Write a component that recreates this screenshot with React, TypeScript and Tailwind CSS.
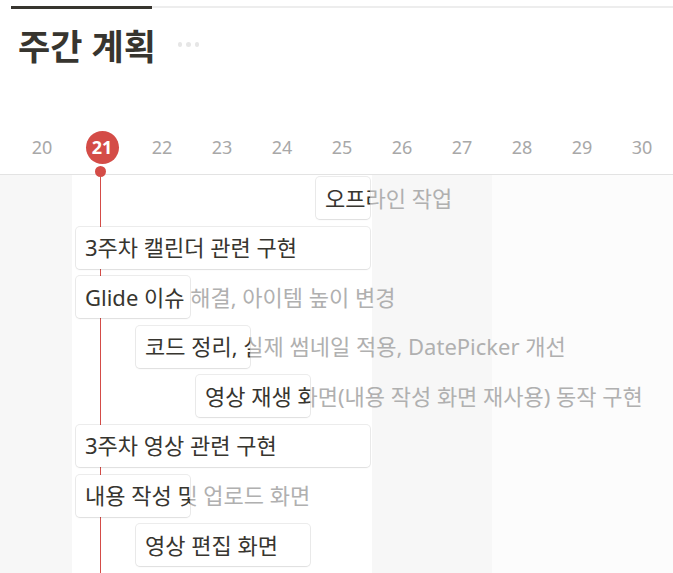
const days = [20, 21, 22, 23, 24, 25, 26, 27, 28, 29, 30]

type Task = { title: string; start: string; span: string }

// start/span are full class names so Tailwind picks them up
const tasks: Task[] = [
  { title: '오프라인 작업', start: 'col-start-7', span: 'col-span-1' },
  { title: '3주차 캘린더 관련 구현', start: 'col-start-3', span: 'col-span-5' },
  { title: 'Glide 이슈 해결, 아이템 높이 변경', start: 'col-start-3', span: 'col-span-2' },
  { title: '코드 정리, 실제 썸네일 적용, DatePicker 개선', start: 'col-start-4', span: 'col-span-2' },
  { title: '영상 재생 화면(내용 작성 화면 재사용) 동작 구현', start: 'col-start-5', span: 'col-span-2' },
  { title: '3주차 영상 관련 구현', start: 'col-start-3', span: 'col-span-5' },
  { title: '내용 작성 및 업로드 화면', start: 'col-start-3', span: 'col-span-2' },
  { title: '영상 편집 화면', start: 'col-start-4', span: 'col-span-3' },
]

function TaskCard({ task }: { task: Task }) {
  return (
    <div className={`${task.start} ${task.span} relative ml-[4px] mr-[2px] mt-[2px] h-[42px]`}>
      <span className="absolute left-[9px] top-0 flex h-full items-center whitespace-nowrap text-[#b0b0b0]">
        {task.title}
      </span>
      <div className="absolute inset-0 flex items-center overflow-hidden rounded-[4px] bg-white pl-[9px] shadow-[0_0_0_1px_rgba(15,15,15,0.08),0_1px_2px_rgba(15,15,15,0.06)]">
        <span className="whitespace-nowrap text-[#37352f]">{task.title}</span>
      </div>
    </div>
  )
}

export default function App() {
  return (
    <div className="relative h-[573px] w-[673px] overflow-hidden bg-white font-['Noto_Sans','Noto_Sans_CJK_KR',sans-serif] text-[22px]">
      <header className="h-[175px] border-b border-[#e3e3e3]">
        <div className="flex items-start pt-[6px]">
          <div className="ml-[11px] h-[3px] w-[141px] bg-[#37352f]" />
          <div className="h-[2px] flex-1 bg-[#ededed]" />
        </div>
        <div className="mt-[17.5px] flex h-[40px] items-center gap-[22px] pl-[18px]">
          <h1 className="text-[35px] font-bold leading-[40px] text-[#37352f]">주간 계획</h1>
          <div className="mt-[-4px] flex gap-[4px]">
            <span className="h-[4.5px] w-[4.5px] rounded-full bg-[#e6e6e6]" />
            <span className="h-[4.5px] w-[4.5px] rounded-full bg-[#e6e6e6]" />
            <span className="h-[4.5px] w-[4.5px] rounded-full bg-[#e6e6e6]" />
          </div>
        </div>
        <div className="mt-[64.5px] grid h-[33px] grid-cols-[12px_repeat(11,60px)] text-[18px]">
          {days.map((d, i) => (
            <div
              key={d}
              className={`${i === 0 ? 'col-start-2' : ''} flex items-center justify-center text-[#a8a8a8]`}
            >
              {d === 21 ? (
                <span className="flex h-[33px] w-[33px] items-center justify-center rounded-full bg-[#d44c47] font-bold text-white">
                  21
                </span>
              ) : (
                d
              )}
            </div>
          ))}
        </div>
      </header>

      <main className="relative h-[398px]">
        {/* column shading behind the bars */}
        <div className="absolute inset-0 flex">
          <div className="w-[72px] bg-[#f7f7f7]" />
          <div className="w-[300px] bg-white" />
          <div className="w-[120px] bg-[#f7f7f7]" />
          <div className="flex-1 bg-[#fcfcfc]" />
        </div>
        {/* today marker */}
        <div className="absolute left-[95px] top-[-9px] h-[11px] w-[11px] rounded-full bg-[#d44c47]" />
        <div className="absolute bottom-0 left-[100px] top-0 w-[1px] bg-[#d44c47]" />

        <div className="relative">
          {tasks.map((t) => (
            <div key={t.title} className="grid h-[49.6px] grid-cols-[12px_repeat(11,60px)] items-start">
              <TaskCard task={t} />
            </div>
          ))}
        </div>
      </main>
    </div>
  )
}
